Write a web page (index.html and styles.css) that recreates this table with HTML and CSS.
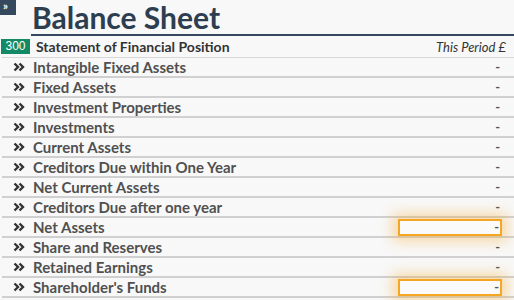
FILE: index.html
```html
<!DOCTYPE html>
<html>
<head>
<meta charset="utf-8">
<link rel="stylesheet" href="styles.css">
</head>
<body>
<div class="page">
  <div class="top">
    <div class="toggle">»</div>
    <h1 class="title">Balance Sheet</h1>
  </div>
  <div class="head-row">
    <span class="badge">300</span>
    <span class="head-label">Statement of Financial Position</span>
    <span class="head-period">This Period £</span>
  </div>
  <div class="rows">
    <div class="row"><svg class="chev" viewBox="0 0 12 10"><path d="M1.5 1.5L5 5L1.5 8.5M6.5 1.5L10 5L6.5 8.5"/></svg><span class="label">Intangible Fixed Assets</span><span class="val">-</span></div>
    <div class="row"><svg class="chev" viewBox="0 0 12 10"><path d="M1.5 1.5L5 5L1.5 8.5M6.5 1.5L10 5L6.5 8.5"/></svg><span class="label">Fixed Assets</span><span class="val">-</span></div>
    <div class="row"><svg class="chev" viewBox="0 0 12 10"><path d="M1.5 1.5L5 5L1.5 8.5M6.5 1.5L10 5L6.5 8.5"/></svg><span class="label">Investment Properties</span><span class="val">-</span></div>
    <div class="row"><svg class="chev" viewBox="0 0 12 10"><path d="M1.5 1.5L5 5L1.5 8.5M6.5 1.5L10 5L6.5 8.5"/></svg><span class="label">Investments</span><span class="val">-</span></div>
    <div class="row"><svg class="chev" viewBox="0 0 12 10"><path d="M1.5 1.5L5 5L1.5 8.5M6.5 1.5L10 5L6.5 8.5"/></svg><span class="label">Current Assets</span><span class="val">-</span></div>
    <div class="row"><svg class="chev" viewBox="0 0 12 10"><path d="M1.5 1.5L5 5L1.5 8.5M6.5 1.5L10 5L6.5 8.5"/></svg><span class="label">Creditors Due within One Year</span><span class="val">-</span></div>
    <div class="row"><svg class="chev" viewBox="0 0 12 10"><path d="M1.5 1.5L5 5L1.5 8.5M6.5 1.5L10 5L6.5 8.5"/></svg><span class="label">Net Current Assets</span><span class="val">-</span></div>
    <div class="row"><svg class="chev" viewBox="0 0 12 10"><path d="M1.5 1.5L5 5L1.5 8.5M6.5 1.5L10 5L6.5 8.5"/></svg><span class="label">Creditors Due after one year</span><span class="val">-</span></div>
    <div class="row"><svg class="chev" viewBox="0 0 12 10"><path d="M1.5 1.5L5 5L1.5 8.5M6.5 1.5L10 5L6.5 8.5"/></svg><span class="label">Net Assets</span><span class="val box">-</span></div>
    <div class="row"><svg class="chev" viewBox="0 0 12 10"><path d="M1.5 1.5L5 5L1.5 8.5M6.5 1.5L10 5L6.5 8.5"/></svg><span class="label">Share and Reserves</span><span class="val">-</span></div>
    <div class="row"><svg class="chev" viewBox="0 0 12 10"><path d="M1.5 1.5L5 5L1.5 8.5M6.5 1.5L10 5L6.5 8.5"/></svg><span class="label">Retained Earnings</span><span class="val">-</span></div>
    <div class="row"><svg class="chev" viewBox="0 0 12 10"><path d="M1.5 1.5L5 5L1.5 8.5M6.5 1.5L10 5L6.5 8.5"/></svg><span class="label">Shareholder's Funds</span><span class="val box">-</span></div>
  </div>
</div>
</body>
</html>
```
FILE: styles.css
```css
html, body {
  margin: 0;
  padding: 0;
  background: #f8f8f8;
}
body {
  font-family: Lato, "Open Sans", sans-serif;
  width: 514px;
  height: 300px;
  overflow: hidden;
}
.page {
  display: flex;
  flex-direction: column;
}
.top {
  display: flex;
  align-items: flex-start;
  height: 36px;
}
.toggle {
  width: 16px;
  height: 15px;
  background: #34495e;
  color: #fff;
  font-size: 11px;
  font-weight: bold;
  line-height: 11px;
  padding-left: 3px;
  box-sizing: border-box;
}
.title {
  flex: 1;
  margin: 0 0 0 15px;
  height: 34px;
  border-bottom: 2px solid #34495e;
  color: #2c3e50;
  font-size: 30px;
  font-weight: bold;
  line-height: 34px;
  padding-left: 1px;
}
.head-row {
  display: flex;
  align-items: center;
  height: 21px;
  border-bottom: 1px solid #d8d8d8;
  margin-left: 2px;
  padding-right: 8px;
}
.badge {
  width: 29px;
  height: 15px;
  background: #138a66;
  color: #fff;
  font-family: "Liberation Sans", Arial, sans-serif;
  font-size: 12px;
  line-height: 15px;
  text-align: center;
  margin-left: -1px;
}
.head-label {
  margin-left: 6px;
  font-size: 14px;
  font-weight: bold;
  color: #333;
  flex: 1;
}
.head-period {
  font-size: 13px;
  font-style: italic;
  color: #333;
}
.rows {
  display: flex;
  flex-direction: column;
  margin-left: 2px;
}
.row {
  display: flex;
  align-items: center;
  height: 18px;
  border-bottom: 2px solid #d0d0d0;
}
.chev {
  width: 12px;
  height: 10px;
  margin-left: 11px;
  margin-right: 8px;
  fill: none;
  stroke: #333;
  stroke-width: 2.4;
  stroke-linecap: butt;
  stroke-linejoin: miter;
}
.label {
  flex: 1;
  font-size: 15px;
  font-weight: bold;
  color: #505050;
}
.val {
  width: 104px;
  height: 14px;
  box-sizing: border-box;
  text-align: right;
  font-size: 13px;
  font-weight: bold;
  line-height: 14px;
  color: #555;
  padding-right: 2px;
  margin-right: 12px;
}
.val.box {
  border: 2px solid #f5a623;
  background: #fafafa;
  box-shadow: 0 0 14px 5px rgba(245, 166, 35, 0.4);
  height: 17px;
  line-height: 13px;
  padding-right: 1px;
}
```
